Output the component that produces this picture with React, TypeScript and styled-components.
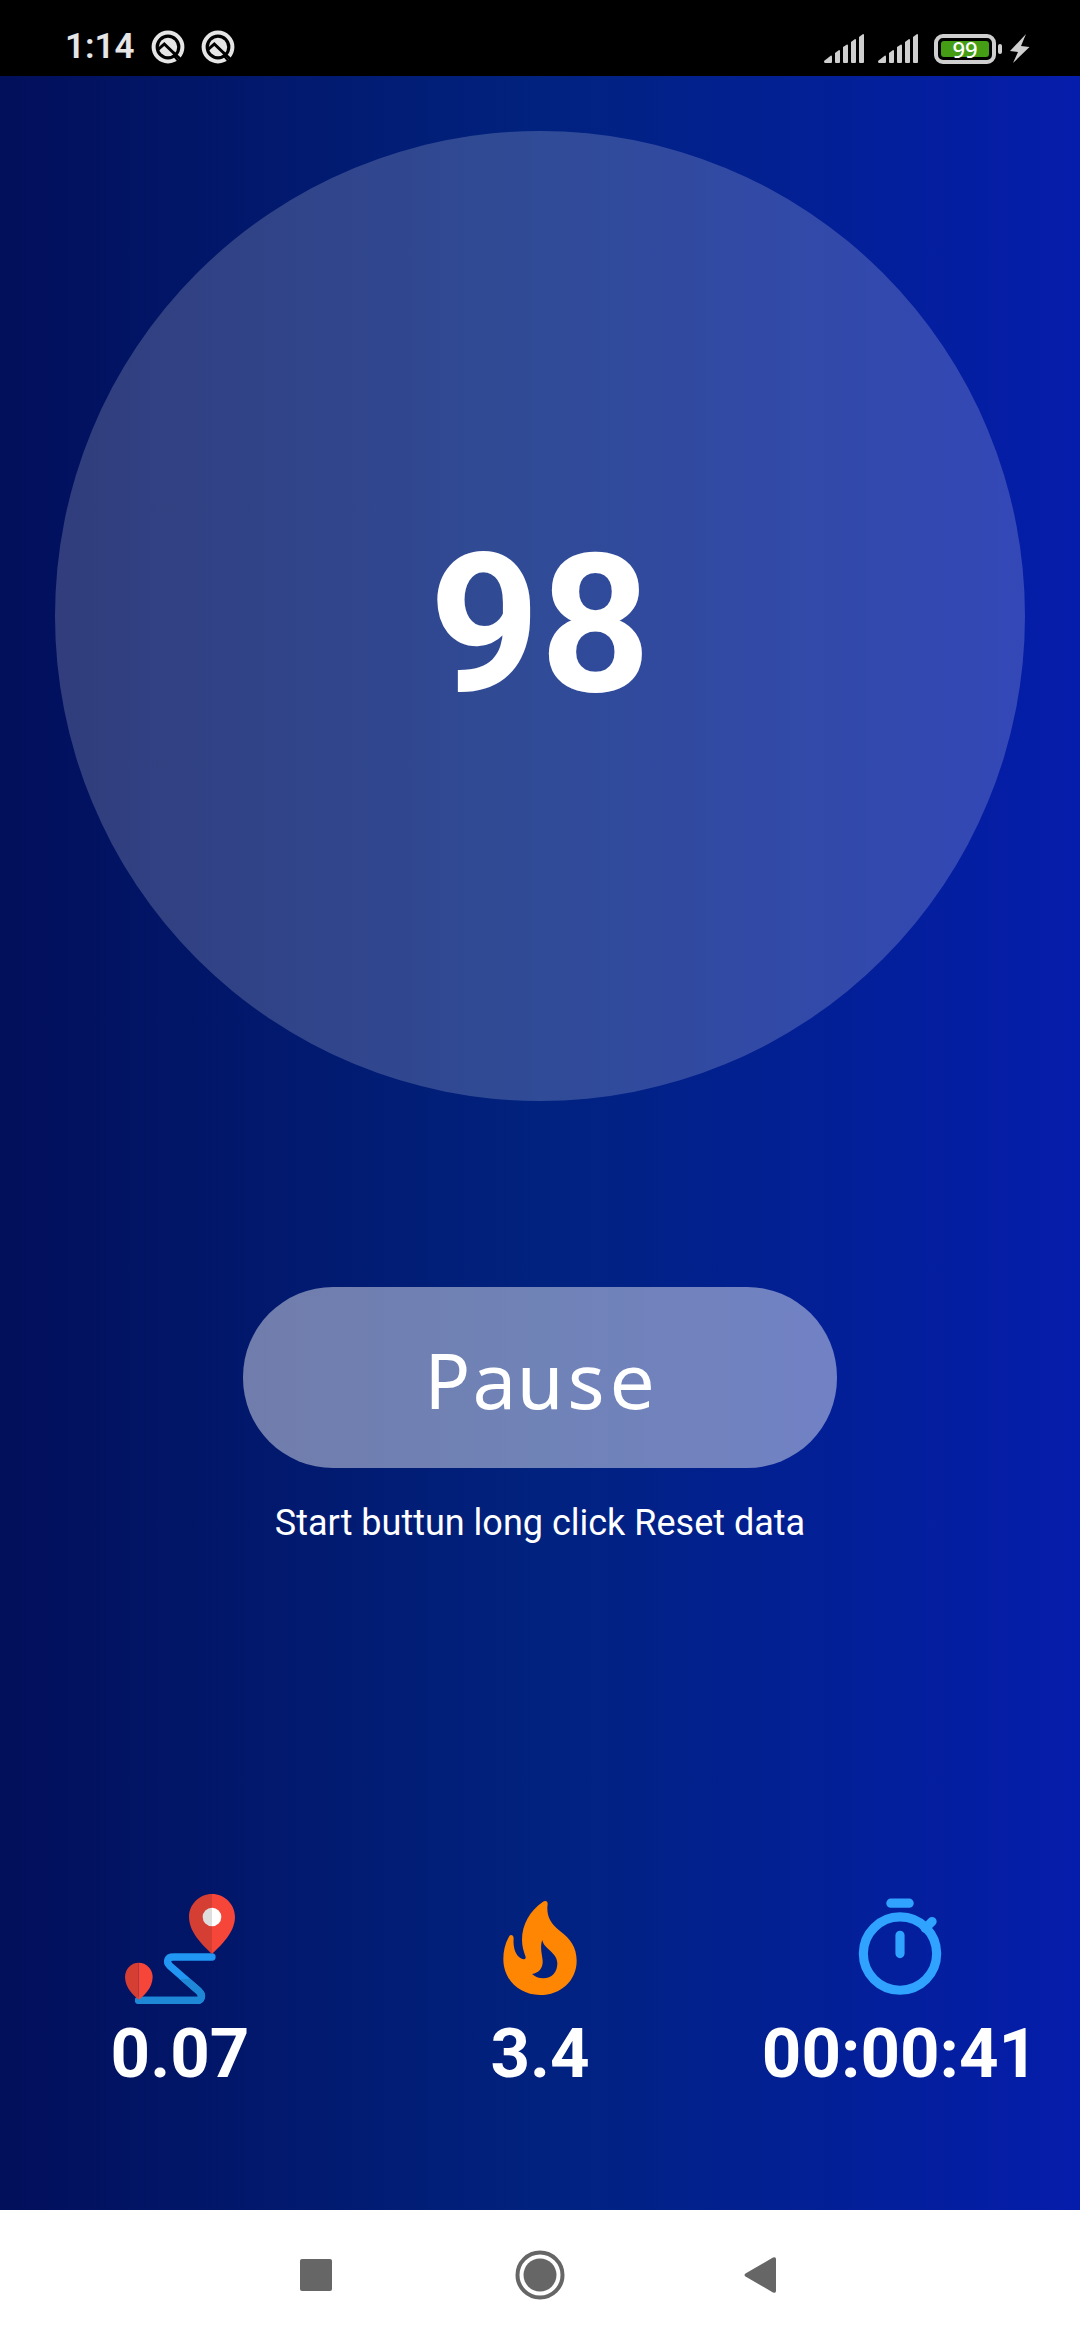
import React, { useState } from "react";
import styled, { createGlobalStyle } from "styled-components";

const GlobalStyle = createGlobalStyle`
  *, *::before, *::after { box-sizing: border-box; }
  body {
    margin: 0;
    font-family: Roboto, "Liberation Sans", sans-serif;
  }
`;

const Screen = styled.div`
  display: flex;
  flex-direction: column;
  min-height: 100vh;
  background: #fff;
`;

const StatusBar = styled.header`
  display: flex;
  align-items: flex-end;
  justify-content: space-between;
  height: 76px;
  padding: 0 50px 12px 65px;
  background: #000;
  color: #e6e6e6;
`;

const StatusGroup = styled.div<{ $gap: number }>`
  display: flex;
  align-items: center;
  gap: ${(p) => p.$gap}px;
`;

const Clock = styled.time`
  font-size: 35px;
  font-weight: 600;
  line-height: 34px;
`;

const Battery = styled.div`
  display: flex;
  align-items: center;
  gap: 2px;
  margin-left: 2px;

  &::after {
    content: "";
    width: 4px;
    height: 10px;
    border-radius: 2px;
    background: #cfcfcf;
  }
`;

const BatteryShell = styled.div`
  width: 62px;
  height: 30px;
  padding: 3px;
  border: 4px solid #cfcfcf;
  border-radius: 9px;
`;

const BatteryLevel = styled.div`
  height: 16px;
  border-radius: 3px;
  background: #459d15;
  color: #fff;
  font-family: "Noto Sans", sans-serif;
  font-size: 22px;
  font-weight: 500;
  line-height: 16px;
  text-align: center;
`;

const Main = styled.main`
  display: flex;
  flex: 1;
  flex-direction: column;
  align-items: center;
  padding: 55px 0 115px;
  background: linear-gradient(90deg, #020f5b 0%, #01227f 50%, #051dab 100%);
  color: #fff;
`;

const StepDial = styled.div`
  display: flex;
  align-items: center;
  justify-content: center;
  width: calc(100% - 110px);
  padding-top: 18px;
  aspect-ratio: 1;
  border-radius: 50%;
  background: rgba(255, 255, 255, 0.19);
  font-size: 193px;
  font-weight: 700;
`;

const PauseButton = styled.button`
  width: 55%;
  height: 181px;
  margin-top: 186px;
  padding: 3px 0 0;
  border: 0;
  border-radius: 90px;
  background: rgba(255, 255, 255, 0.44);
  color: #fff;
  font-family: "Droid Sans Mono", "Noto Sans Mono", "DejaVu Sans Mono", monospace;
  font-size: 77px;
  cursor: pointer;
`;

const Hint = styled.p`
  margin: 34px 0 0;
  font-size: 36px;
  line-height: 42px;
`;

const Stats = styled.section`
  display: grid;
  grid-template-columns: repeat(3, 1fr);
  width: 100%;
  margin-top: auto;
`;

const Stat = styled.div`
  display: flex;
  flex-direction: column;
  align-items: center;
  gap: 9px;
  font-size: 69px;
  font-weight: 700;
  line-height: 82px;
`;

const NavBar = styled.nav`
  display: flex;
  justify-content: center;
  height: 130px;
  background: #fff;
`;

const NavButton = styled.button`
  display: flex;
  align-items: center;
  justify-content: center;
  width: 224px;
  padding: 0;
  border: 0;
  background: none;
  color: #666;
`;

const QIcon = () => (
  <svg width="34" height="34" viewBox="0 0 34 34" aria-hidden="true">
    <circle cx="17" cy="17" r="14.4" fill="none" stroke="#e6e6e6" strokeWidth="4" />
    <circle cx="17" cy="17" r="9.2" fill="#e6e6e6" />
    <path d="M6 20.5 L13.3 14 L28.5 28.5" fill="none" stroke="#000" strokeWidth="3" />
    <path d="M23 26 L29 33" stroke="#000" strokeWidth="2" />
    <path d="M22 22 L31 30.5" stroke="#000" strokeWidth="2" />
  </svg>
);

const SignalIcon = () => (
  <svg width="40" height="30" viewBox="0 0 40 30" fill="#cfcfcf" aria-hidden="true">
    <path d="M0 27 L7 21.5 Q8 21.5 8 22.5 V28 Q8 29 7 29 H1 Q0 29 0 27Z" />
    <path d="M11 19 L15 16 Q16 16 16 17 V28 Q16 29 15 29 H12 Q11 29 11 28Z" />
    <path d="M19 13 L23 10.5 Q24 10.5 24 11.5 V28 Q24 29 23 29 H20 Q19 29 19 28Z" />
    <path d="M27 8 L31 5 Q32 5 32 6 V28 Q32 29 31 29 H28 Q27 29 27 28Z" />
    <path d="M35 3 L39 0 Q40 0 40 1 V28 Q40 29 39 29 H36 Q35 29 35 28Z" />
  </svg>
);

const BoltIcon = () => (
  <svg width="20" height="30" viewBox="0 0 20 30" fill="#cfcfcf" aria-hidden="true">
    <path d="M16 0 L0 17 L8 18 L3 29 L19.5 13 L11 12Z" />
  </svg>
);

const RouteIcon = () => {
  const road = "M336 264 H220 C202 264 197 279 210 291 L297 367 C310 379 304 394 292 394 H116";
  const pin = "M336 255 C322 240 267 196 267 144 C267 106 298 75 336 75";
  const smallPin = "M116 392 C105 384 75 358 75 324 C75 300 93 281 116 281";
  return (
    <svg width="110" height="110" viewBox="75 75 330 330" aria-hidden="true">
      <defs>
        <clipPath id="lower-road">
          <rect x="75" y="330" width="330" height="80" />
        </clipPath>
      </defs>
      <g fill="none" strokeWidth="22" strokeLinecap="round">
        <path d={road} stroke="#2196f3" />
        <path d={road} stroke="#1e88d6" clipPath="url(#lower-road)" />
      </g>
      <path d={`${pin}Z`} fill="#d53e33" />
      <path d="M336 255 C350 240 405 196 405 144 C405 106 374 75 336 75Z" fill="#f6463a" />
      <path d="M336 116 A28 28 0 0 0 336 172Z" fill="#dedede" />
      <path d="M336 116 A28 28 0 0 1 336 172Z" fill="#fff" />
      <path d={`${smallPin}Z`} fill="#d53e33" />
      <path d="M116 392 C128 384 158 358 158 324 C158 300 139 281 116 281Z" fill="#f6463a" />
    </svg>
  );
};

const FlameIcon = () => (
  <svg width="110" height="110" viewBox="45 45 330 330" aria-hidden="true">
    <path
      fill="#ff8603"
      fillRule="evenodd"
      d="M218 69 C180 95 156 138 156 182 C156 202 161 216 167 234 Q168 241 160 241 C141 237 128 213 131 178 Q130 168 123 168 Q119 168 116 175 C105 195 100 217 100 240 C100 302 148 348 210 348 C272 348 320 305 320 245 C320 205 301 179 270 156 C241 134 228 108 233 75 Q233 66 226 66 Q222 66 218 69Z M217 183 C220 209 262 220 262 253 C262 280 245 298 220 298 C206 298 195 293 186 285 C207 282 219 268 218 245 C216 225 209 204 217 183Z"
    />
  </svg>
);

const StopwatchIcon = () => (
  <svg
    width="110"
    height="110"
    viewBox="0 0 24 24"
    fill="none"
    stroke="#30a2ff"
    strokeWidth="2"
    strokeLinecap="round"
    aria-hidden="true"
  >
    <circle cx="12" cy="13" r="8" />
    <path d="M10 2 H14 M12 9 V13 M17.5 7.5 L19 6" />
  </svg>
);

export default function App() {
  const [running, setRunning] = useState(true);
  return (
    <Screen>
      <GlobalStyle />
      <StatusBar>
        <StatusGroup $gap={16}>
          <Clock>1:14</Clock>
          <QIcon />
          <QIcon />
        </StatusGroup>
        <StatusGroup $gap={14}>
          <SignalIcon />
          <SignalIcon />
          <StatusGroup $gap={8}>
            <Battery>
              <BatteryShell>
                <BatteryLevel>99</BatteryLevel>
              </BatteryShell>
            </Battery>
            <BoltIcon />
          </StatusGroup>
        </StatusGroup>
      </StatusBar>
      <Main>
        <StepDial>98</StepDial>
        <PauseButton type="button" onClick={() => setRunning(!running)}>
          {running ? "Pause" : "Start"}
        </PauseButton>
        <Hint>Start buttun long click Reset data</Hint>
        <Stats>
          <Stat>
            <RouteIcon />
            <span>0.07</span>
          </Stat>
          <Stat>
            <FlameIcon />
            <span>3.4</span>
          </Stat>
          <Stat>
            <StopwatchIcon />
            <span>00:00:41</span>
          </Stat>
        </Stats>
      </Main>
      <NavBar>
        <NavButton type="button" aria-label="Recent apps">
          <svg width="32" height="32" fill="currentColor">
            <rect width="32" height="32" rx="2" />
          </svg>
        </NavButton>
        <NavButton type="button" aria-label="Home">
          <svg width="50" height="50" fill="currentColor">
            <circle cx="25" cy="25" r="22.5" fill="none" stroke="currentColor" strokeWidth="4" />
            <circle cx="25" cy="25" r="16.5" />
          </svg>
        </NavButton>
        <NavButton type="button" aria-label="Back">
          <svg width="40" height="36" viewBox="0 0 40 36" fill="currentColor">
            <path d="M1.5 16.5 L29 0.5 Q32 -0.5 32 2 V34 Q32 36.5 29 35.5 L1.5 19.5 Q-0.5 18 1.5 16.5Z" />
          </svg>
        </NavButton>
      </NavBar>
    </Screen>
  );
}
